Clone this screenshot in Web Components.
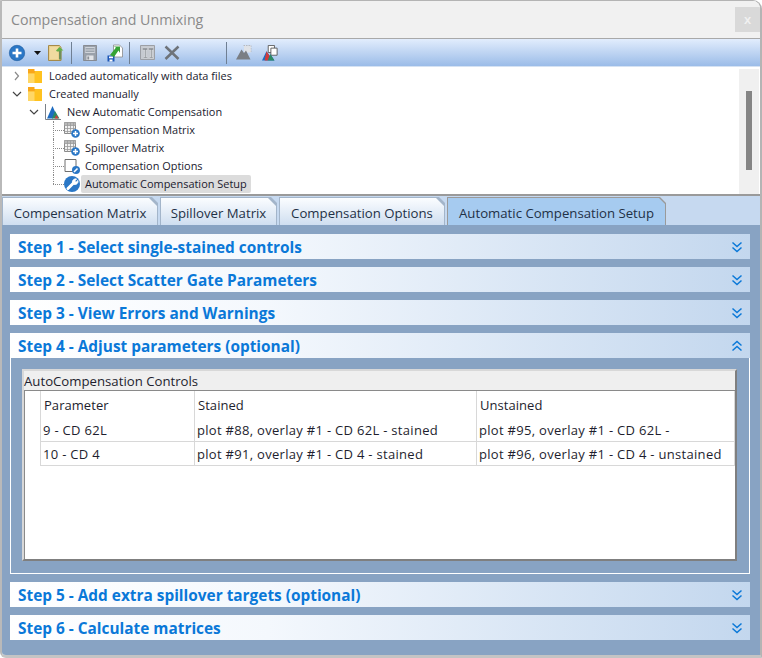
<!DOCTYPE html>
<html><head><meta charset="utf-8"><style>
html,body{margin:0;padding:0;background:#fff}
body{font-family:"Open Sans","Noto Sans",sans-serif;width:762px;height:658px;overflow:hidden}
</style></head><body>
<template id="t-window"><style>
:host{display:flex;flex-direction:column;width:762px;height:658px;box-sizing:border-box;background:#fff;border-top:1px solid #b4b4b4;border-left:2px solid #b9b9b9;border-right:2px solid #b4b4b4;border-bottom:3px solid #c4c4c4;border-radius:0 9px 0 6px;overflow:hidden}
</style><slot></slot></template>

<template id="t-titlebar"><style>
:host{display:flex;align-items:center;justify-content:space-between;height:37px;flex:none;background:#f1f1f1;border-bottom:1px solid #a9a9a9;box-sizing:content-box;color:#8a8a8a;font-size:14.2px;padding:0 0 0 9px}
.x{width:25px;height:25px;background:#d9d9d9;color:#f1f1f1;display:flex;align-items:center;justify-content:center;font-size:13px;font-weight:600;line-height:1}
</style><span><slot></slot></span><span class="x">x</span></template>

<template id="t-toolbar"><style>
:host{display:flex;align-items:center;height:28px;flex:none;background:linear-gradient(#e2edfd,#9bbce8);padding-left:6px;box-sizing:border-box;border-bottom:1px solid #d5e2f3}
::slotted(svg){flex:none;display:block}
</style><slot></slot></template>

<template id="t-tree"><style>
:host{display:flex;height:127px;flex:none;background:#fff;border-bottom:2px solid #9a9a9a;box-sizing:content-box}
.list{flex:1;display:flex;flex-direction:column;font-size:10.95px;color:#1a1a2e}
.sb{width:20px;flex:none;background:#f0f0f0;display:flex;justify-content:center;margin:2px 1px 0 0;padding-top:22px;box-sizing:border-box}
.th{width:6px;height:79px;background:#858585}
</style><div class="list"><slot></slot></div><div class="sb"><div class="th"></div></div></template>

<template id="t-row"><style>
:host{display:flex;align-items:center;height:18px;flex:none;position:relative;box-sizing:border-box}
.lab{margin-left:3px;padding:0 4px;height:18px;line-height:18px;border-radius:2px;white-space:nowrap}
:host([level="1"]) .lab{margin-left:2px}
:host([sel]) .lab{background:#dcdcdc}
:host([kid]) .lab{margin-left:1px}
.icon{display:flex;flex:none}
.dot-h{position:absolute;left:51px;top:9px;width:11px;border-top:1px dotted #8a8a8a}
.dot-v{position:absolute;left:51px;top:0;height:18px;border-left:1px dotted #8a8a8a}
:host([last]) .dot-v{height:9px}
</style><span class="lines"></span><span class="chev"></span><span class="icon"><slot name="icon"></slot></span><span class="lab"><slot></slot></span></template>

<template id="t-tabs"><style>
:host{display:flex;height:29px;flex:none;background:#c6d9f0;gap:2px;padding-top:1px;box-sizing:border-box}
</style><slot></slot></template>

<template id="t-tab"><style>
:host{display:block;height:28px;box-sizing:border-box;background:#a3b5ca;clip-path:polygon(0 0,calc(100% - 6px) 0,100% 6px,100% 100%,0 100%);padding:1px 1px 0 1px;flex:none}
.in{height:27px;box-sizing:border-box;background:linear-gradient(#fbfdff,#cfdef0);clip-path:polygon(0 0,calc(100% - 8px) 0,100% 8px,100% 100%,0 100%);display:flex;align-items:center;justify-content:center;font-size:13.2px;color:#1f3146;white-space:nowrap;padding-top:3px}
:host([active]){background:#9a9a9a}
:host([active]) .in{background:#a6cbf0;clip-path:polygon(0 0,calc(100% - 6px) 0,100% 6px,100% 100%,0 100%)}
</style><div class="in"><slot></slot></div></template>

<template id="t-panel"><style>
:host{display:flex;flex-direction:column;flex:1;background:#88a3c3;padding:9px 10px 0 8px;gap:8px;min-height:0;box-sizing:border-box}
</style><slot></slot></template>

<template id="t-step"><style>
:host{display:block;flex:none}
.h{height:25px;display:flex;align-items:center;justify-content:space-between;padding:0 6px 0 8px;background:linear-gradient(90deg,#fff 0,#f4f8fd 35%,#c3d7ee 100%);color:#0a78d8;font-weight:700;font-size:15.4px;box-sizing:border-box;white-space:nowrap}
.h svg{display:block;flex:none}
.h span{padding-top:2px}
.b{display:none}
:host([open]) .b{display:block;box-sizing:border-box;height:216px;border:1px solid #fff;border-top:0;padding:11px 12px 12px 11px}
</style><div class="h"><span><slot name="title"></slot></span><svg width="14" height="14" viewBox="0 0 14 14" fill="none" stroke="#0a78d8" stroke-width="1.5"><path id="c" d="M2.500 2.500 7 6.500l4.500-4M2.500 7.500 7 11.500l4.500-4"/></svg></div><div class="b"><slot></slot></div></template>

<template id="t-group"><style>
:host{display:flex;flex-direction:column;height:192px;box-sizing:border-box;background:#efefef;border:2px solid;border-color:#d8d8d8 #7f7f7f #7f7f7f #d8d8d8;padding:2px 0 0 0;font-size:13.2px;color:#1e1e2e}
.t{height:17px;line-height:16px;flex:none;white-space:nowrap}
.w{flex:1;background:#fff;border:1px solid #8a8a8a;border-bottom:0;border-right:0;min-height:0}
</style><div class="t"><slot name="title"></slot></div><div class="w"><slot></slot></div></template>

<template id="t-grid"><style>
:host{display:grid;grid-template-columns:154px 282px 258px;grid-template-rows:27px 24px 24px;margin-left:15px;width:694px;border-left:1px solid #d8d8d8}
</style><slot></slot></template>

<template id="t-cell"><style>
:host{display:flex;align-items:center;box-sizing:border-box;border-right:1px solid #d8d8d8;padding-left:2px;white-space:nowrap;overflow:hidden;font-size:13px;letter-spacing:.3px}
:host([head]){padding-left:3px;letter-spacing:.05px}
:host([ruled]){border-bottom:1px solid #d8d8d8}
</style><slot></slot></template>

<x-window>
<x-titlebar>Compensation and Unmixing</x-titlebar>
<x-toolbar>
<svg width="18" height="18" viewBox="0 0 18 18"><circle cx="9" cy="9" r="7.700" fill="#2a77c6" stroke="#1c5a9e" stroke-width=".6"/><path d="M9 4.500v9M4.500 9h9" stroke="#fff" stroke-width="2.600"/></svg>
<svg width="10" height="6" viewBox="0 0 10 6" style="margin-left:7px"><path d="M1 1h7L4.500 5z" fill="#111"/></svg>
<svg width="17" height="18" viewBox="0 0 17 18" style="margin-left:5px"><path d="M.5 1.500h11l1.500 2V16.500H.5z" fill="#ead08c" stroke="#a58a4a"/><path d="M2 3h8v12H2z" fill="#f0dba0"/><path d="M8 6.500l3.500-3.500L15.500 6.500H13.300V8.500H11V7.500H9z" fill="#62b048"/><path d="M11 7h2.300v8.500H11z" fill="#6f8f59"/></svg>
<svg width="2" height="22" viewBox="0 0 2 22" style="margin-left:6px"><path d="M.5 0v22" stroke="#6f7f93"/></svg>
<svg width="14" height="16" viewBox="0 0 16 16" style="margin-left:10px" preserveAspectRatio="none"><path d="M.5.500h15v15H.5z" fill="#9aa1aa" stroke="#84888e"/><path d="M2.500 2h11v6h-11z" fill="#d0d4da"/><path d="M3 3.500h10M3 5h10M3 6.500h10" stroke="#9aa1aa"/><path d="M4 10.500h8V15H4z" fill="#e3e5e8"/><path d="M5 11.500h2v3H5z" fill="#8a8f96"/></svg>
<svg width="16" height="18" viewBox="0 0 16 18" style="margin-left:10px"><path d="M6.500 1h6l3 3v9h-9z" fill="#fff" stroke="#8a8a8a" stroke-width=".8"/><path d="M.5 11.500h7v6h-7z" fill="#1c56b6"/><path d="M2 12.500h4v1.800H2zM2.500 15.500h3v2h-3z" fill="#fff"/><path d="M3 11L9 3.500l-2.500-1H13V9l-1.500-2.500L7 13z" fill="#35a335"/></svg>
<svg width="2" height="22" viewBox="0 0 2 22" style="margin-left:6px"><path d="M.5 0v22" stroke="#6f7f93"/></svg>
<svg width="15" height="15" viewBox="0 0 15 15" style="margin-left:9px"><path d="M.5.500h14v14H.5z" fill="#c6cad0" stroke="#9c9fa5"/><path d="M2.500 3h5v2H6v7h1.500v1h-4v-1H5V5H2.500zM8.500 3h5v2H12v7h1v1H9.500v-1H11V5H8.500z" fill="#8d9197" stroke="#e6e8ea" stroke-width=".3"/></svg>
<svg width="16" height="15" viewBox="0 0 16 15" style="margin-left:9px"><path d="M1.500 1.500l13 12.500M14.500 1.500 1.500 14" stroke="#6e7379" stroke-width="2.500"/></svg>
<svg width="2" height="22" viewBox="0 0 2 22" style="margin-left:46px"><path d="M.5 0v22" stroke="#6f7f93"/></svg>
<svg width="16" height="15" viewBox="0 0 16 15" style="margin-left:8px"><path d="M7.500.500h7.500v7" fill="#dfe2e7" stroke="#b4b9c0" stroke-dasharray="1.500 1"/><path d="M8 1h6.500v6.500H8z" fill="#dfe2e7"/><path d="M0 14.500 5.500 4.500 8 8 10 5.500 14.500 14.500z" fill="#7a7e84"/></svg>
<svg width="16" height="16" viewBox="0 0 18 18" style="margin-left:10px"><path d="M7 .500h7v8H7z" fill="#fff" stroke="#555"/><path d="M10 3.500h7v8h-7z" fill="#fff" stroke="#555"/><path d="M0 17.500 5 7l3.500 5 1-1.500 4.500 7z" fill="#1f6cc0"/><path d="M5 7l3.500 5-2 5.500H3z" fill="#d23a3a"/><path d="M9.500 10.500 14 17.500H6.500z" fill="#2d8a63"/></svg>
</x-toolbar>
<x-tree>
<x-row level="0" chev="r"><svg slot="icon" width="14" height="14" viewBox="0 0 14 14"><path d="M0 0h6.500v2H14v12H0z" fill="#f9a61a"/><path d="M0 4.500h6.500l.5-2.500h7v12H0z" fill="#ffc21f"/><path d="M0 4.500h6.500V14H0z" fill="#ffd766"/></svg>Loaded automatically with data files</x-row>
<x-row level="0" chev="d"><svg slot="icon" width="14" height="14" viewBox="0 0 14 14"><path d="M0 0h6.500v2H14v12H0z" fill="#f9a61a"/><path d="M0 4.500h6.500l.5-2.500h7v12H0z" fill="#ffc21f"/><path d="M0 4.500h6.500V14H0z" fill="#ffd766"/></svg>Created manually</x-row>
<x-row level="1" chev="d"><svg slot="icon" width="16" height="16" viewBox="0 0 16 16"><path d="M.5 0v15.500H16" fill="none" stroke="#7a8088"/><path d="M2 14.500 7.500 2 11 10l-3 4.500z" fill="#1f6cc0"/><path d="M7 14.500 10 7l4.500 7.500z" fill="#2d8a63"/><path d="M9.500 14.500 11.500 11l2 3.500z" fill="#d23a3a"/></svg>New Automatic Compensation</x-row>
<x-row kid><svg slot="icon" width="16" height="16" viewBox="0 0 16 16"><path d="M.5.500h11v11H.5z" fill="#f1f1f1" stroke="#8a8a8a"/><path d="M.5.500h11v3H.5z" fill="#b9b9b9"/><path d="M.5 3.500h11M.5 6.500h11M.5 9.500h11M3.500.500v11M6.500.500v11M9.500.500v11" stroke="#9a9a9a" stroke-width=".8"/><circle cx="11.500" cy="11.500" r="4.300" fill="#2a77c6"/><path d="M11.500 9v5M9 11.500h5" stroke="#fff" stroke-width="1.500"/></svg>Compensation Matrix</x-row>
<x-row kid><svg slot="icon" width="16" height="16" viewBox="0 0 16 16"><path d="M.5.500h11v11H.5z" fill="#f1f1f1" stroke="#8a8a8a"/><path d="M.5.500h11v3H.5z" fill="#b9b9b9"/><path d="M.5 3.500h11M.5 6.500h11M.5 9.500h11M3.500.500v11M6.500.500v11M9.500.500v11" stroke="#9a9a9a" stroke-width=".8"/><circle cx="11.500" cy="11.500" r="4.300" fill="#2a77c6"/><path d="M11.500 9v5M9 11.500h5" stroke="#fff" stroke-width="1.500"/></svg>Spillover Matrix</x-row>
<x-row kid><svg slot="icon" width="16" height="16" viewBox="0 0 16 16"><path d="M1 1.500h11v12H1z" fill="#fff" stroke="#6f6f6f"/><circle cx="12" cy="12" r="4" fill="#2a77c6"/><path d="M10 14l3.500-3.500" stroke="#fff" stroke-width="1.600"/></svg>Compensation Options</x-row>
<x-row kid last sel><svg slot="icon" width="18" height="18" viewBox="0 0 18 18" style="margin-left:-1px;margin-right:-1px"><circle cx="9" cy="9" r="8" fill="#2a77c6"/><path d="M5 13.500l5.500-5.500" stroke="#fff" stroke-width="3" stroke-linecap="round"/><path d="M9.300 7.200a3.300 3.300 0 0 1 4.300-3.200l-1.800 2 1.200 1.200 2-1.800a3.300 3.300 0 0 1-4.200 4z" fill="#fff" stroke="#fff" stroke-width=".8"/></svg>Automatic Compensation Setup</x-row>
</x-tree>
<x-tabs>
<x-tab style="width:156px">Compensation Matrix</x-tab>
<x-tab style="width:117px">Spillover Matrix</x-tab>
<x-tab style="width:166px">Compensation Options</x-tab>
<x-tab style="width:219px" active>Automatic Compensation Setup</x-tab>
</x-tabs>
<x-panel>
<x-step><span slot="title">Step 1 - Select single-stained controls</span></x-step>
<x-step><span slot="title">Step 2 - Select Scatter Gate Parameters</span></x-step>
<x-step><span slot="title">Step 3 - View Errors and Warnings</span></x-step>
<x-step open><span slot="title">Step 4 - Adjust parameters (optional)</span>
<x-group><span slot="title">AutoCompensation Controls</span>
<x-grid>
<x-cell head>Parameter</x-cell><x-cell head>Stained</x-cell><x-cell head>Unstained</x-cell>
<x-cell ruled>9 - CD 62L</x-cell><x-cell ruled>plot #88, overlay #1 - CD 62L - stained</x-cell><x-cell ruled>plot #95, overlay #1 - CD 62L -</x-cell>
<x-cell ruled>10 - CD 4</x-cell><x-cell ruled>plot #91, overlay #1 - CD 4 - stained</x-cell><x-cell ruled>plot #96, overlay #1 - CD 4 - unstained</x-cell>
</x-grid>
</x-group>
</x-step>
<x-step><span slot="title">Step 5 - Add extra spillover targets (optional)</span></x-step>
<x-step><span slot="title">Step 6 - Calculate matrices</span></x-step>
</x-panel>
</x-window>
<script>
function reg(name, tid, init){
  customElements.define(name, class extends HTMLElement{
    constructor(){super();this.attachShadow({mode:'open'}).appendChild(document.getElementById(tid).content.cloneNode(true));}
    connectedCallback(){ if(init) init(this); }
  });
}
reg('x-window','t-window');reg('x-titlebar','t-titlebar');reg('x-toolbar','t-toolbar');reg('x-tree','t-tree');
reg('x-row','t-row',function(el){
  const s=el.shadowRoot, lvl=+el.getAttribute('level')||0, kid=el.hasAttribute('kid');
  const chev=s.querySelector('.chev'), lines=s.querySelector('.lines');
  if(kid){
    lines.innerHTML='<i class="dot-v"></i><i class="dot-h"></i>';
    el.style.paddingLeft='62px';
  } else {
    el.style.paddingLeft=(lvl?27:10)+'px';
    const c=el.getAttribute('chev');
    const d=c==='r'?'M3 1 6.500 5 3 9':'M1 3 5 7 9 3';
    chev.innerHTML='<svg width="10" height="10" viewBox="0 0 10 10" fill="none" stroke="'+(c==='r'?'#8a8a8a':'#444')+'" stroke-width="1.200" style="display:block;margin-right:6px"><path d="'+d+'"/></svg>';
  }
});
reg('x-tabs','t-tabs');reg('x-tab','t-tab');reg('x-panel','t-panel');
reg('x-step','t-step',function(el){
  if(el.hasAttribute('open')) el.shadowRoot.querySelector('#c').setAttribute('d','M2.500 6.500 7 2.500l4.500 4M2.500 11.500 7 7.500l4.500 4');
});
reg('x-group','t-group');reg('x-grid','t-grid');reg('x-cell','t-cell');
</script>
</body></html>
